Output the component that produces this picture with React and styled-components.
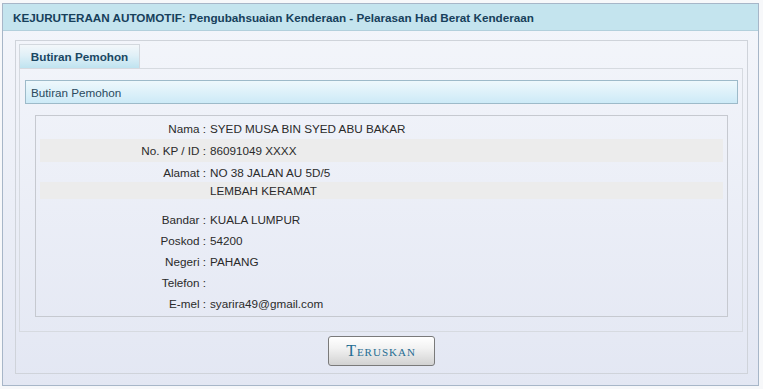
import styled, { createGlobalStyle } from 'styled-components';

const GlobalStyle = createGlobalStyle`
  body {
    margin: 0;
    background: #f7f8fa;
    font-family: "Liberation Sans", Arial, sans-serif;
    font-size: 11.7px;
    color: #2a2a2a;
  }
`;

const Frame = styled.div`
  width: 755px;
  height: 381px;
  margin: 3px 0 0 2px;
  border: 1px solid #a7b6c8;
  background: linear-gradient(#f4f6fb, #e3e7f3);
  display: flex;
  flex-direction: column;
`;

const Header = styled.div`
  height: 26px;
  display: flex;
  align-items: center;
  padding-left: 10px;
  background: #c4e4ee;
  border-bottom: 1px solid #b3d0dc;
  color: #17405b;
  font-weight: bold;
  font-size: 11.7px;
`;

const Body = styled.div`
  padding: 9px 10px 11px 12px;
  flex: 1;
  display: flex;
`;

const Container = styled.div`
  flex: 1;
  border: 1px solid #cfd3da;
  padding: 3px 4px 0 3px;
  display: flex;
  flex-direction: column;
`;

const TabList = styled.div`
  display: flex;
`;

const Tab = styled.div`
  width: 119px;
  height: 23px;
  display: flex;
  align-items: center;
  justify-content: center;
  border: 1px solid #d3d8de;
  border-bottom: none;
  background: linear-gradient(#f3f7fa, #e0f0f7 45%, #bfe3f0);
  color: #1a4763;
  font-weight: bold;
`;

const TabPanel = styled.div`
  border: 1px solid #d6dae0;
  padding: 11px 4px 14px 5px;
`;

const SectionHeader = styled.div`
  height: 22px;
  display: flex;
  align-items: center;
  padding-left: 5px;
  border: 1px solid #9dbac9;
  background: linear-gradient(#eef8fc, #cdeaf7);
  color: #2b4a5e;
`;

const DataBox = styled.div`
  margin: 11px 10px 0 10px;
  border: 1px solid #c6c9d0;
  padding: 2px 4px 3px 4px;
`;

const Row = styled.div`
  display: flex;
  align-items: center;
  height: ${(p) => p.$h || 21}px;
  background: ${(p) => (p.$shade ? '#ececec' : 'transparent')};
`;

const Label = styled.div`
  width: 166px;
  text-align: right;
  white-space: nowrap;
`;

const Value = styled.div`
  padding-left: 4px;
  white-space: nowrap;
`;

const Footer = styled.div`
  display: flex;
  justify-content: center;
  padding-top: 4px;
`;

const Button = styled.button`
  width: 107px;
  height: 30px;
  border: 1px solid #7a7a7a;
  border-radius: 3px;
  background: linear-gradient(#ffffff, #f2f2f2 40%, #d2d2d2);
  color: #266d92;
  font-family: "Liberation Serif", "Times New Roman", serif;
  font-variant: small-caps;
  font-size: 16px;
  letter-spacing: 1px;
  padding: 0;
  cursor: pointer;
`;

const rows = [
  { label: 'Nama', value: 'SYED MUSA BIN SYED ABU BAKAR', h: 21 },
  { label: 'No. KP / ID', value: '86091049 XXXX', h: 23, shade: true },
  { label: 'Alamat', value: 'NO 38 JALAN AU 5D/5', h: 20 },
  { label: '', value: 'LEMBAH KERAMAT', h: 17, shade: true, noColon: true },
  { spacer: true, h: 10 },
  { label: 'Bandar', value: 'KUALA LUMPUR' },
  { label: 'Poskod', value: '54200' },
  { label: 'Negeri', value: 'PAHANG' },
  { label: 'Telefon', value: '' },
  { label: 'E-mel', value: 'syarira49@gmail.com', h: 20 },
];

const App = () => {
  return (
    <>
      <GlobalStyle />
      <Frame>
        <Header>
          KEJURUTERAAN AUTOMOTIF: Pengubahsuaian Kenderaan - Pelarasan Had Berat Kenderaan
        </Header>
        <Body>
          <Container>
            <TabList>
              <Tab>Butiran Pemohon</Tab>
            </TabList>
            <TabPanel>
              <SectionHeader>Butiran Pemohon</SectionHeader>
              <DataBox>
                {rows.map((r, i) =>
                  r.spacer ? (
                    <Row key={i} $h={r.h} />
                  ) : (
                    <Row key={i} $h={r.h} $shade={r.shade}>
                      <Label>{r.noColon ? '' : `${r.label} :`}</Label>
                      <Value>{r.value}</Value>
                    </Row>
                  )
                )}
              </DataBox>
            </TabPanel>
            <Footer>
              <Button>Teruskan</Button>
            </Footer>
          </Container>
        </Body>
      </Frame>
    </>
  );
};

export default App;
